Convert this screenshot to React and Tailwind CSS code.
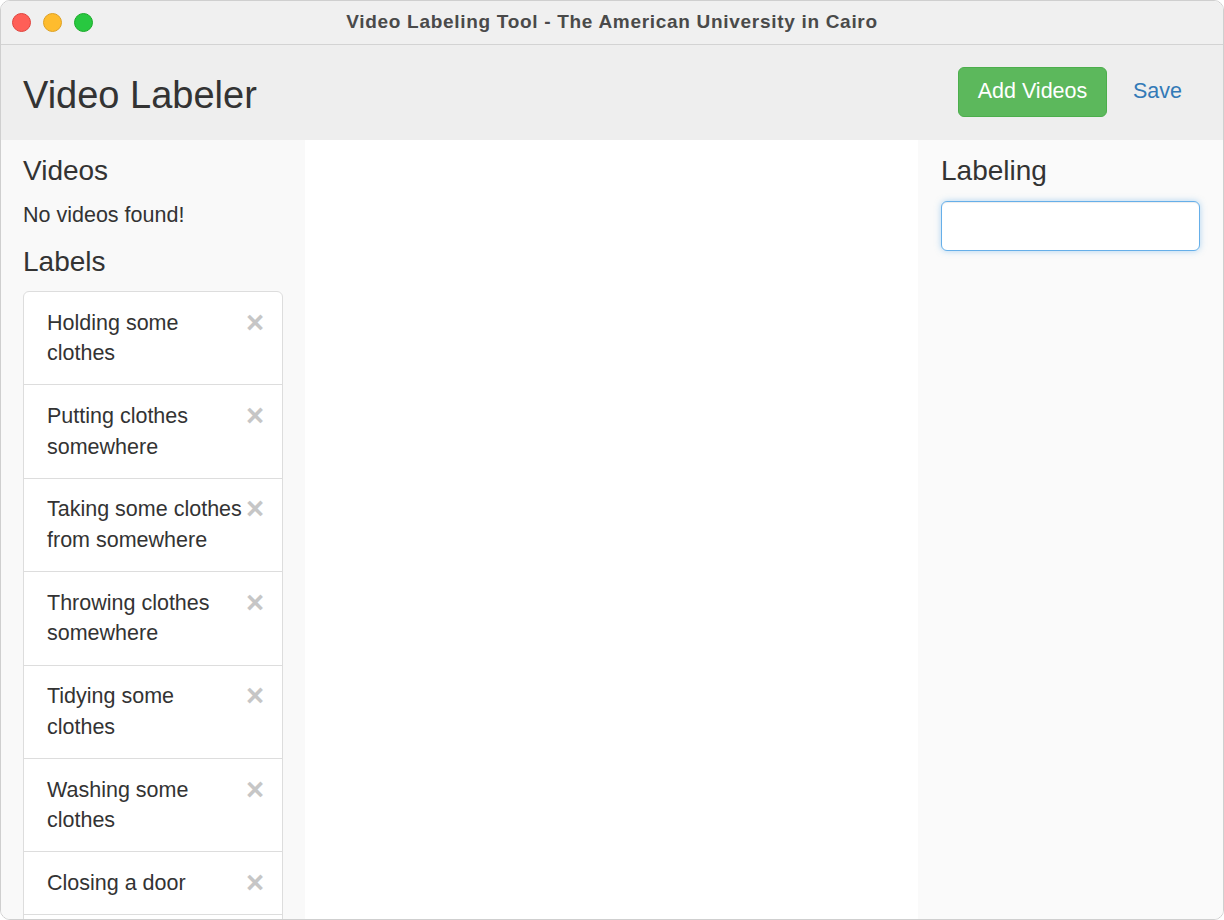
import { useState } from 'react';

const LABELS = [
  'Holding some clothes',
  'Putting clothes somewhere',
  'Taking some clothes from somewhere',
  'Throwing clothes somewhere',
  'Tidying some clothes',
  'Washing some clothes',
  'Closing a door',
  'Opening a door',
];

function TitleBar() {
  return (
    <div className="relative flex h-[44px] items-center justify-center border-b border-[#d3d3d3] bg-[#f0f0f0]">
      <div className="absolute left-[11px] top-[12px] flex gap-[12px]">
        <span className="h-[19px] w-[19px] rounded-full border border-[#e0443e] bg-[#ff5f57]" />
        <span className="h-[19px] w-[19px] rounded-full border border-[#dea123] bg-[#febc2e]" />
        <span className="h-[19px] w-[19px] rounded-full border border-[#1aab29] bg-[#28c840]" />
      </div>
      <p className="text-[19px] font-bold tracking-[0.7px] text-[#4a4a4a]">
        Video Labeling Tool - The American University in Cairo
      </p>
    </div>
  );
}

function Header() {
  return (
    <div className="flex h-[95px] items-center justify-between bg-[#eeeeee] pl-[22px] pr-[41px]">
      <h1 className="mt-[5px] text-[38px] leading-none text-[#333]">Video Labeler</h1>
      <div className="mb-[2px] flex items-center">
        <button
          type="button"
          className="flex h-[50px] w-[149px] items-center justify-center rounded-[6px] border border-[#4cae4c] bg-[#5cb85c] text-[21.5px] text-white"
        >
          Add Videos
        </button>
        <a className="ml-[26px] text-[21.5px] text-[#337ab7]">Save</a>
      </div>
    </div>
  );
}

function LabelItem({ name }) {
  return (
    <li className="-mb-px border border-[#dddddd] bg-white pl-[23px] pr-[19px] py-[15.5px] text-[21.5px] leading-[30.7px] text-[#333] first:rounded-t-[6px]">
      <span className="float-right w-[17px] text-center text-[31px] font-bold leading-[30px] text-[#c6c6c6]">
        ×
      </span>
      {name}
    </li>
  );
}

export default function App() {
  const [label, setLabel] = useState('');

  return (
    <div
      className="flex h-[920px] w-[1224px] flex-col overflow-hidden rounded-[10px] border border-[#cfcfcf] bg-white"
      style={{ fontFamily: '"Liberation Sans", Arial, sans-serif' }}
    >
      <TitleBar />
      <Header />
      <div className="flex min-h-0 flex-1">
        <aside className="w-[304px] shrink-0 bg-[#f9f9f9] pl-[22px] pr-[21px] pt-[15px]">
          <h3 className="text-[28px] leading-[31px] text-[#333]">Videos</h3>
          <p className="mt-[14px] text-[21.5px] leading-[31px] text-[#333]">No videos found!</p>
          <h3 className="mt-[15px] text-[28px] leading-[31px] text-[#333]">Labels</h3>
          <ul className="mt-[14px] w-[260px]">
            {LABELS.map((name) => (
              <LabelItem key={name} name={name} />
            ))}
          </ul>
        </aside>
        <main className="flex-1 bg-white" />
        <aside className="w-[305px] shrink-0 bg-[#fafafa] pl-[23px] pr-[23px] pt-[15px]">
          <h3 className="text-[28px] leading-[31px] text-[#333]">Labeling</h3>
          <input
            type="text"
            value={label}
            onChange={(e) => setLabel(e.target.value)}
            className="mt-[15px] h-[50px] w-full rounded-[6px] border border-[#66afe9] bg-white px-[18px] text-[21px] outline-none shadow-[inset_0_1px_1px_rgba(0,0,0,0.075),0_0_6px_rgba(102,175,233,0.5)]"
          />
        </aside>
      </div>
    </div>
  );
}
